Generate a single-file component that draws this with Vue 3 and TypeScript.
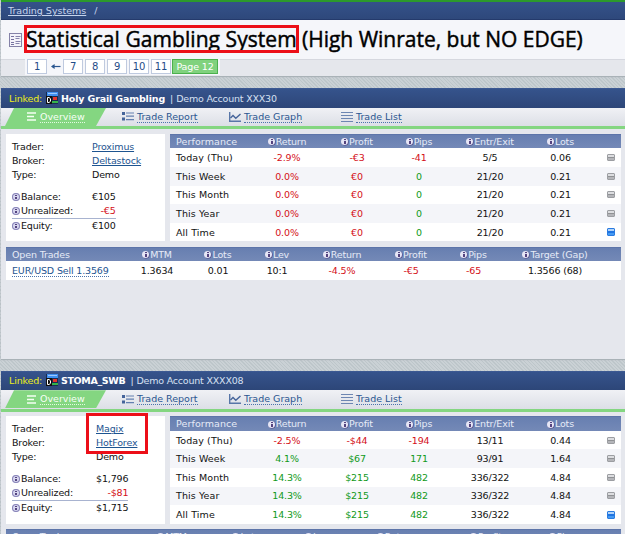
<template>
  <div class="page">
    <nav class="crumbs"><a>Trading Systems</a><span>/</span></nav>

    <header class="heading">
      <div class="title-row">
        <svg class="title-icon" width="13" height="14" viewBox="0 0 13 14">
          <rect x="0.5" y="0.5" width="12" height="13" fill="#f4f3fa" stroke="#8582a8" />
          <path d="M2 3.5h3M2 6.5h3M2 9.5h3M2 11.5h3" stroke="#77739f" />
          <path d="M6.5 3.5h5M6.5 5.5h4M6.5 8.5h5M6.5 10.5h4" stroke="#8885ad" />
        </svg>
        <h1><span class="marked">Statistical Gambling System</span> <span class="rest">(High Winrate, but NO EDGE)</span></h1>
      </div>
      <div class="pager-row">
        <div class="pager">
          <a class="page-link">1</a>
          <svg class="arrow" width="10" height="7" viewBox="0 0 10 7">
            <path d="M1 3.5h8.5" stroke="#2b5790" stroke-width="1.2" />
            <path d="M0 3.5L3.6 1v5z" fill="#2b5790" />
          </svg>
          <a v-for="n in pages" :key="n" class="page-link">{{ n }}</a>
          <a class="page-link current">Page 12</a>
        </div>
      </div>
    </header>

    <section v-for="system in systems" :key="system.name" class="system">
      <div class="system-head">
        <span class="linked">Linked:</span>
        <svg width="12" height="12" viewBox="0 0 12 12">
          <rect x="0" y="0" width="12" height="12" fill="#182c50" />
          <rect x="1" y="0" width="11" height="4" fill="#3f8ff0" />
          <rect x="2" y="1" width="9" height="1" fill="#9cc9ff" />
          <rect x="7" y="5" width="4" height="3" fill="#e3342c" />
          <rect x="6" y="9" width="6" height="2" fill="#35b34a" />
          <rect x="0" y="4" width="6" height="8" fill="#111" />
          <path d="M1.5 5.5h1.5l1.5 1.2v2.6l-1.5 1.2H1.5z" fill="none" stroke="#fff" />
        </svg>
        <strong :style="{ letterSpacing: system.nameSpacing }">{{ system.name }}</strong>
        <span class="sep">|</span>
        <span class="account">{{ system.account }}</span>
      </div>

      <div class="tabs">
        <a class="tab active">
          <svg width="9" height="9" viewBox="0 0 9 9"><path d="M0 1h9M0 4.5h7M0 8h9" stroke="#f4fff2" stroke-width="1.6" /></svg>
          <span>Overview</span>
        </a>
        <a class="tab report">
          <svg width="12" height="9" viewBox="0 0 12 9">
            <path d="M0 1.5h3M0 7h3" stroke="#45649a" stroke-width="3" />
            <path d="M4 1h8M4 4.2h8M4 7.6h8" stroke="#6480b0" stroke-width="1.2" />
          </svg>
          <span>Trade Report</span>
        </a>
        <a class="tab graph">
          <svg width="12" height="10" viewBox="0 0 12 10">
            <path d="M0.7 0v9.2H12" fill="none" stroke="#5876a8" stroke-width="1.4" />
            <path d="M1.5 6L4 3.5l2.8 2.8L11.5 2" fill="none" stroke="#45649a" stroke-width="1.4" />
          </svg>
          <span>Trade Graph</span>
        </a>
        <a class="tab list">
          <svg width="12" height="10" viewBox="0 0 12 10"><path d="M0 0.5h12M0 3.5h12M0 6.5h12M0 9.5h12" stroke="#6d86b2" /></svg>
          <span>Trade List</span>
        </a>
      </div>

      <div class="body">
        <div class="cards">
          <div class="info">
            <div class="facts" :style="{ gridTemplateColumns: system.valueX + 'px auto' }">
              <span>Trader:</span><a>{{ system.trader }}</a>
              <span>Broker:</span><a>{{ system.broker }}</a>
              <span>Type:</span><span>Demo</span>
            </div>
            <table class="money">
              <tbody>
                <tr v-for="row in system.money" :key="row[0]" :class="row[0].toLowerCase()">
                  <td :style="{ width: system.valueX + 'px' }"><i class="tip light"></i>{{ row[0] }}:</td>
                  <td class="amount" :class="tone(row[1], true)">{{ row[1] }}</td>
                </tr>
              </tbody>
            </table>
          </div>

          <div class="performance">
            <div class="perf-row head">
              <span class="first">Performance</span>
              <span v-for="h in perfHeads" :key="h"><i class="tip"></i>{{ h }}</span>
              <span></span>
            </div>
            <div v-for="(row, i) in system.performance" :key="row[0]" class="perf-row">
              <span class="first">{{ row[0] }}</span>
              <span v-for="(cell, c) in row.slice(1)" :key="c" :class="tone(cell, c > 2, i > 0 && system.flat && c < 2)">{{ cell }}</span>
              <span class="end"><i class="drive" :class="{ on: i === 4 }"></i></span>
            </div>
          </div>
        </div>

        <div class="trades">
          <div class="trade-row head" :style="{ gridTemplateColumns: system.columns }">
            <span class="first">Open Trades</span>
            <span v-for="h in system.tradeHeads" :key="h"><i class="tip"></i>{{ h }}</span>
          </div>
          <div v-if="system.trade.length" class="trade-row" :style="{ gridTemplateColumns: system.columns }">
            <span class="first"><a>{{ system.trade[0] }}</a></span>
            <span v-for="(cell, c) in system.trade.slice(1)" :key="c" :class="tone(cell, true)">{{ cell }}</span>
          </div>
        </div>
      </div>
    </section>

    <div class="box box-title"></div>
    <div class="box box-trader"></div>
  </div>
</template>

<script setup lang="ts">
interface System {
  name: string;
  nameSpacing: string;
  account: string;
  trader: string;
  broker: string;
  valueX: number;
  flat: boolean;
  money: string[][];
  performance: string[][];
  columns: string;
  tradeHeads: string[];
  trade: string[];
}

const pages = [7, 8, 9, 10, 11];
const perfHeads = ['Return', 'Profit', 'Pips', 'Entr/Exit', 'Lots'];

const systems: System[] = [
  {
    name: 'Holy Grail Gambling',
    nameSpacing: '-.15px',
    account: 'Demo Account XXX30',
    trader: 'Proximus',
    broker: 'Deltastock',
    valueX: 80,
    flat: true,
    money: [['Balance', '€105'], ['Unrealized', '-€5'], ['Equity', '€100']],
    performance: [
      ['Today (Thu)', '-2.9%', '-€3', '-41', '5/5', '0.06'],
      ['This Week', '0.0%', '€0', '0', '21/20', '0.21'],
      ['This Month', '0.0%', '€0', '0', '21/20', '0.21'],
      ['This Year', '0.0%', '€0', '0', '21/20', '0.21'],
      ['All Time', '0.0%', '€0', '0', '21/20', '0.21']
    ],
    columns: '120px 62px 60px 58px 72px 66px 59px 104px',
    tradeHeads: ['MTM', 'Lots', 'Lev', 'Return', 'Profit', 'Pips', 'Target (Gap)'],
    trade: ['EUR/USD Sell 1.3569', '1.3634', '0.01', '10:1', '-4.5%', '-€5', '-65', '1.3566 (68)']
  },
  {
    name: 'STOMA_SWB',
    nameSpacing: '-.35px',
    account: 'Demo Account XXXX08',
    trader: 'Magix',
    broker: 'HotForex',
    valueX: 84,
    flat: false,
    money: [['Balance', '$1,796'], ['Unrealized', '-$81'], ['Equity', '$1,715']],
    performance: [
      ['Today (Thu)', '-2.5%', '-$44', '-194', '13/11', '0.44'],
      ['This Week', '4.1%', '$67', '171', '93/91', '1.64'],
      ['This Month', '14.3%', '$215', '482', '336/322', '4.84'],
      ['This Year', '14.3%', '$215', '482', '336/322', '4.84'],
      ['All Time', '14.3%', '$215', '482', '336/322', '4.84']
    ],
    columns: '129px 74px 74px 68px 90px 90px 62px',
    tradeHeads: ['MTM', 'Lots', 'Lev', 'Return', 'Profit', 'Pips'],
    trade: []
  }
];

// neutral cells only turn red when negative, the others are always coloured
const tone = (value: string, neutral: boolean, forceRed = false) => {
  if (value.startsWith('-') || forceRed) return 'red';
  return neutral ? '' : 'green';
};
</script>

<style>
body {
  overflow: hidden;
}
</style>

<style scoped>
.page {
  position: relative;
  box-sizing: border-box;
  width: 625px;
  height: 534px;
  overflow: hidden;
  padding-left: 1px;
  background: repeating-linear-gradient(45deg, #bdc6ca 0 1px, #cad1d5 1px 2.5px);
  font-family: "DejaVu Sans", Verdana, sans-serif;
  font-size: 9.5px;
  letter-spacing: -.15px;
  color: #111;
}
.crumbs {
  display: flex;
  align-items: center;
  box-sizing: border-box;
  height: 20px;
  padding: 0 7px 0;
  gap: 8px;
  border-top: 2px solid #2c9a2c;
  border-bottom: 1px solid #243a6c;
  background: linear-gradient(#34528a, #2e487b);
  color: #c6d4ec;
}
.crumbs a {
  text-decoration: underline;
  letter-spacing: 0;
}
.heading {
  height: 56px;
  background: #f5f6fa;
  box-shadow: 0 1px 1px #a9b2b7;
}
.title-row {
  display: flex;
  align-items: center;
  height: 39px;
  padding-left: 8px;
}
h1 {
  margin: 0 0 0 4px;
  font-family: "Open Sans", "Noto Sans", sans-serif;
  font-size: 21px;
  font-weight: 500;
  line-height: 37px;
  white-space: nowrap;
  color: #000;
  -webkit-text-stroke: .45px #000;
}
.marked {
  letter-spacing: .06px;
}
.rest {
  letter-spacing: -.01px;
}
.pager-row {
  box-sizing: border-box;
  height: 17px;
  padding-left: 24px;
  background: #e5e7ec;
  border-top: 1px solid #d6d8df;
}
.pager {
  display: flex;
  box-sizing: border-box;
  width: 195px;
  height: 16px;
  margin-top: -1px;
  padding-left: 2px;
  gap: 2px;
  background: #f5f6fa;
}
.page-link {
  box-sizing: border-box;
  width: 20px;
  height: 15px;
  border: 1px solid #bfcadf;
  background: #fff;
  color: #1f4c88;
  font-size: 10px;
  line-height: 13px;
  text-align: center;
}
.arrow {
  margin: 4px 0 0 2px;
}
.page-link.current {
  width: 46px;
  margin-left: -1px;
  border-color: #4bb04d;
  background: #80d27e;
  color: #fff;
  font-size: 9.5px;
}
.system {
  margin-top: 12.4px;
}
.system + .system {
  margin-top: 11.6px;
}
.system-head {
  display: flex;
  align-items: center;
  height: 19.4px;
  padding-left: 8px;
  background: linear-gradient(#36548d, #2d4678);
  box-shadow: inset 0 1px #3c5992;
  color: #d6e0f2;
  white-space: nowrap;
}
.linked {
  width: 37px;
  color: #ecec1a;
}
.system-head strong {
  margin-left: 3px;
  color: #fff;
}
.sep {
  margin: 0 3px 0 5px;
}
.account {
  letter-spacing: -.2px;
}
.tabs {
  display: flex;
  align-items: center;
  box-sizing: border-box;
  height: 21.4px;
  border-bottom: 3px solid #84d681;
  background: linear-gradient(#f0f1f5, #dcdfe6);
}
.tab {
  display: flex;
  align-items: center;
  height: 18px;
  gap: 3px;
  letter-spacing: 0;
  color: #2a5690;
  white-space: nowrap;
}
.tab span {
  line-height: 11px;
  border-bottom: 1px dotted #4b74ac;
}
.tab.active {
  box-sizing: border-box;
  width: 101px;
  margin-left: 4px;
  padding-left: 22px;
  gap: 4px;
  background: #84d681;
  clip-path: polygon(9px 0, 100% 0, 91px 100%, 0 100%);
  color: #f6fff5;
}
.tab.active span {
  border-color: #e3fbe1;
}
.report {
  width: 91px;
  margin-left: 16px;
}
.graph {
  width: 96px;
  margin-left: 16px;
}
.list {
  margin-left: 16px;
}
.body {
  height: 230px;
  padding: 4.9px 4px 0 5px;
  background: #e5e7ed;
  box-shadow: 0 1px 1px #a9b2b7;
  box-sizing: border-box;
}
.cards {
  display: flex;
  gap: 5px;
}
.info {
  box-sizing: border-box;
  width: 159px;
  height: 107.4px;
  padding: 6px 0 0 6px;
  background: #fff;
}
.facts {
  display: grid;
  line-height: 13.8px;
}
.facts a {
  color: #1d5490;
  text-decoration: underline;
}
.money {
  margin-top: 8.5px;
  border-collapse: collapse;
  line-height: 13.8px;
}
.money td {
  padding: 0;
  white-space: nowrap;
}
.money .equity td {
  border-top: 1px solid #a8b3d0;
  line-height: 13px;
}
.money .unrealized .amount {
  text-align: right;
}
.tip {
  display: inline-block;
  position: relative;
  width: 7px;
  height: 7px;
  margin-right: 1px;
  border-radius: 50%;
  background: #e6e6f5;
  vertical-align: -.5px;
  box-shadow: .5px .5px 0 #4b3f80;
}
.tip::before {
  content: "";
  position: absolute;
  left: 3px;
  top: 1px;
  width: 2px;
  height: 5px;
  background: linear-gradient(#54437f 0 1px, #d8d8ee 1px 2px, #54437f 2px);
}
.tip.light {
  width: 8px;
  height: 8px;
  background: #d5d5ee;
  vertical-align: -1px;
  box-shadow: inset 0 0 0 1px #8884b8;
}
.tip.light::before {
  top: 2px;
  height: 4px;
}
.performance {
  width: 451px;
  background: #fff;
}
.perf-row {
  display: grid;
  grid-template-columns: 82px 70px 70px 54px 88px 53px 28px;
  align-items: center;
  height: 18.6px;
  text-align: center;
}
.perf-row:nth-child(odd) {
  background: #f4f5f9;
}
.perf-row.head,
.trade-row.head {
  height: 14.4px;
  background: linear-gradient(#667eb0, #7489b7);
  box-shadow: inset 0 1px #5d75a9;
  color: #e6ebf7;
}
.first {
  padding-left: 6px;
  text-align: left;
}
.perf-row .first {
  letter-spacing: .1px;
}
.end {
  display: flex;
  justify-content: flex-end;
}
.drive {
  box-sizing: border-box;
  width: 8px;
  height: 7px;
  border: 1px solid #9c9ea2;
  border-radius: 1px;
  background: linear-gradient(#dcdde0 0 45%, #8f9194 45% 65%, #b4b5b9 65%);
}
.drive.on {
  height: 8px;
  border-color: #2a7be0;
  background: linear-gradient(#b0d3fa 0 35%, #1f74e2 35% 65%, #459af2 65%);
}
.trades {
  margin-top: 5.4px;
  background: #fff;
}
.trade-row {
  display: grid;
  align-items: center;
  height: 18.6px;
  text-align: center;
  white-space: nowrap;
}
.trade-row a {
  color: #1d5490;
  border-bottom: 1px dotted #4b74ac;
}
.red {
  color: #d40f17;
}
.green {
  color: #10991a;
}
.box {
  position: absolute;
  box-sizing: border-box;
  border: 3px solid #ec0f18;
}
.box-title {
  left: 24px;
  top: 25px;
  width: 275px;
  height: 28px;
}
.box-trader {
  left: 86px;
  top: 413px;
  width: 62px;
  height: 41px;
}
</style>
